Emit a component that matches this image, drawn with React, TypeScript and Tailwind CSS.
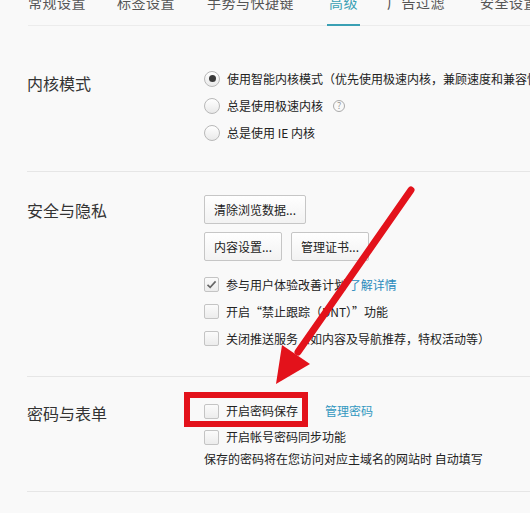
const tabs = [
  { label: "常规设置", cls: "ml-[28px]" },
  { label: "标签设置", cls: "ml-[31px]" },
  { label: "手势与快捷键", cls: "ml-[32px]" },
  { label: "高级", cls: "ml-[35px]", active: true },
  { label: "广告过滤", cls: "ml-[29px]" },
  { label: "安全设置", cls: "ml-[35px]" },
];

function Radio({ checked }: { checked?: boolean }) {
  return (
    <span className="flex h-[16px] w-[16px] shrink-0 items-center justify-center rounded-full border border-[#b8b8b8] bg-linear-to-b from-white to-[#e9e9e9]">
      {checked && <span className="h-[7px] w-[7px] rounded-full bg-[#3a3a3a]" />}
    </span>
  );
}

function Checkbox({ checked }: { checked?: boolean }) {
  return (
    <span className="flex h-[15px] w-[15px] shrink-0 items-center justify-center rounded-[2px] border border-[#c4c4c4] bg-linear-to-b from-[#fbfbfb] to-[#ececec]">
      {checked && (
        <svg width="11" height="11" viewBox="0 0 11 11">
          <path d="M1.5 5.8 L4.2 8.4 L9.6 2.4" fill="none" stroke="#666" strokeWidth="1.6" />
        </svg>
      )}
    </span>
  );
}

function Button({ children }: { children: React.ReactNode }) {
  return (
    <button className="h-[29px] rounded-[2px] border border-[#c6c6c6] bg-linear-to-b from-white to-[#f2f2f2] px-[9px] text-[12px] text-[#222]">
      {children}
    </button>
  );
}

function Row({ children, h = "h-[27px]" }: { children: React.ReactNode; h?: string }) {
  return <div className={`flex items-center gap-[7px] text-[12px] text-[#222] ${h}`}>{children}</div>;
}

export default function App() {
  return (
    <div className="relative h-[513px] w-[530px] overflow-hidden bg-[#f9f9f9] font-['Noto_Sans_CJK_SC','Microsoft_YaHei',sans-serif]">
      {/* tabs */}
      <div className="ml-[28px] flex h-[26px] border-b border-[#ececec]">
        {tabs.map((t, i) => (
          <div key={t.label} className={`-mt-[5px] -mb-px flex h-[31px] shrink-0 flex-col ${i === 0 ? "" : t.cls}`}>
            <span
              className={`text-[14px] leading-[14px] tracking-[0.5px] whitespace-nowrap ${
                t.active ? "text-[#3aa0b4]" : "text-[#555]"
              }`}
            >
              {t.label}
            </span>
            {t.active && <span className="-mx-[2px] mt-auto h-[2px] bg-[#3aa0b4]" />}
          </div>
        ))}
      </div>

      <div className="pl-[27px]">
        {/* 内核模式 */}
        <section className="flex border-b border-[#e6e6e6] pt-[39px] pb-[25px]">
          <div className="mt-[6px] w-[177px] shrink-0 text-[16px] leading-[24px] text-[#333]">内核模式</div>
          <div className="flex flex-col">
            <Row>
              <Radio checked />
              <span className="whitespace-nowrap">使用智能内核模式（优先使用极速内核，兼顾速度和兼容性）</span>
            </Row>
            <Row>
              <Radio />
              <span>总是使用极速内核</span>
              <span className="ml-[3px] flex h-[12px] w-[12px] items-center justify-center rounded-full border border-[#aaa] text-[9px] leading-none text-[#999]">
                ?
              </span>
            </Row>
            <Row>
              <Radio />
              <span>总是使用 IE 内核</span>
            </Row>
          </div>
        </section>

        {/* 安全与隐私 */}
        <section className="flex border-b border-[#e6e6e6] pt-[23px] pb-[24px]">
          <div className="mt-[3px] w-[177px] shrink-0 text-[16px] leading-[24px] text-[#333]">安全与隐私</div>
          <div className="flex flex-col">
            <div className="flex">
              <Button>清除浏览数据...</Button>
            </div>
            <div className="mt-[8px] flex gap-[9px]">
              <Button>内容设置...</Button>
              <Button>管理证书...</Button>
            </div>
            <div className="mt-[10px]">
              <Row>
                <Checkbox checked />
                <span className="whitespace-nowrap">
                  参与用户体验改善计划 <span className="text-[#2b8bbd]">了解详情</span>
                </span>
              </Row>
              <Row>
                <Checkbox />
                <span className="whitespace-nowrap">开启“禁止跟踪（DNT）”功能</span>
              </Row>
              <Row>
                <Checkbox />
                <span className="whitespace-nowrap">关闭推送服务（如内容及导航推荐，特权活动等）</span>
              </Row>
            </div>
          </div>
        </section>

        {/* 密码与表单 */}
        <section className="flex border-b border-[#e6e6e6] pt-[21px] pb-[23px]">
          <div className="mt-[3px] w-[177px] shrink-0 text-[16px] leading-[24px] text-[#333]">密码与表单</div>
          <div className="flex flex-col">
            <Row h="h-[26px]">
              <Checkbox />
              <span>开启密码保存</span>
              <span className="ml-[20px] text-[#3398c0]">管理密码</span>
            </Row>
            <Row h="h-[26px]">
              <Checkbox />
              <span>开启帐号密码同步功能</span>
            </Row>
            <div className="text-[12px] leading-[18px] whitespace-nowrap text-[#222]">
              保存的密码将在您访问对应主域名的网站时 自动填写
            </div>
          </div>
        </section>

        <section className="flex pt-[19px]">
          <div className="w-[190px] shrink-0" />
          <div className="text-[12px] leading-[18px] whitespace-nowrap text-[#aaa]">
            下载文件时总是询问保存位置，并显示下载管理器
          </div>
        </section>
      </div>

      {/* annotation overlay */}
      <div className="absolute top-[392px] left-[184px] h-[35px] w-[124px] border-[6px] border-[#e3121b]" />
      <svg className="pointer-events-none absolute top-0 left-0" width="530" height="513">
        <line x1="411" y1="190" x2="298" y2="352" stroke="#e3121b" strokeWidth="7" strokeLinecap="round" />
        <polygon points="276,384 282,345 310,364" fill="#e3121b" />
      </svg>
    </div>
  );
}
